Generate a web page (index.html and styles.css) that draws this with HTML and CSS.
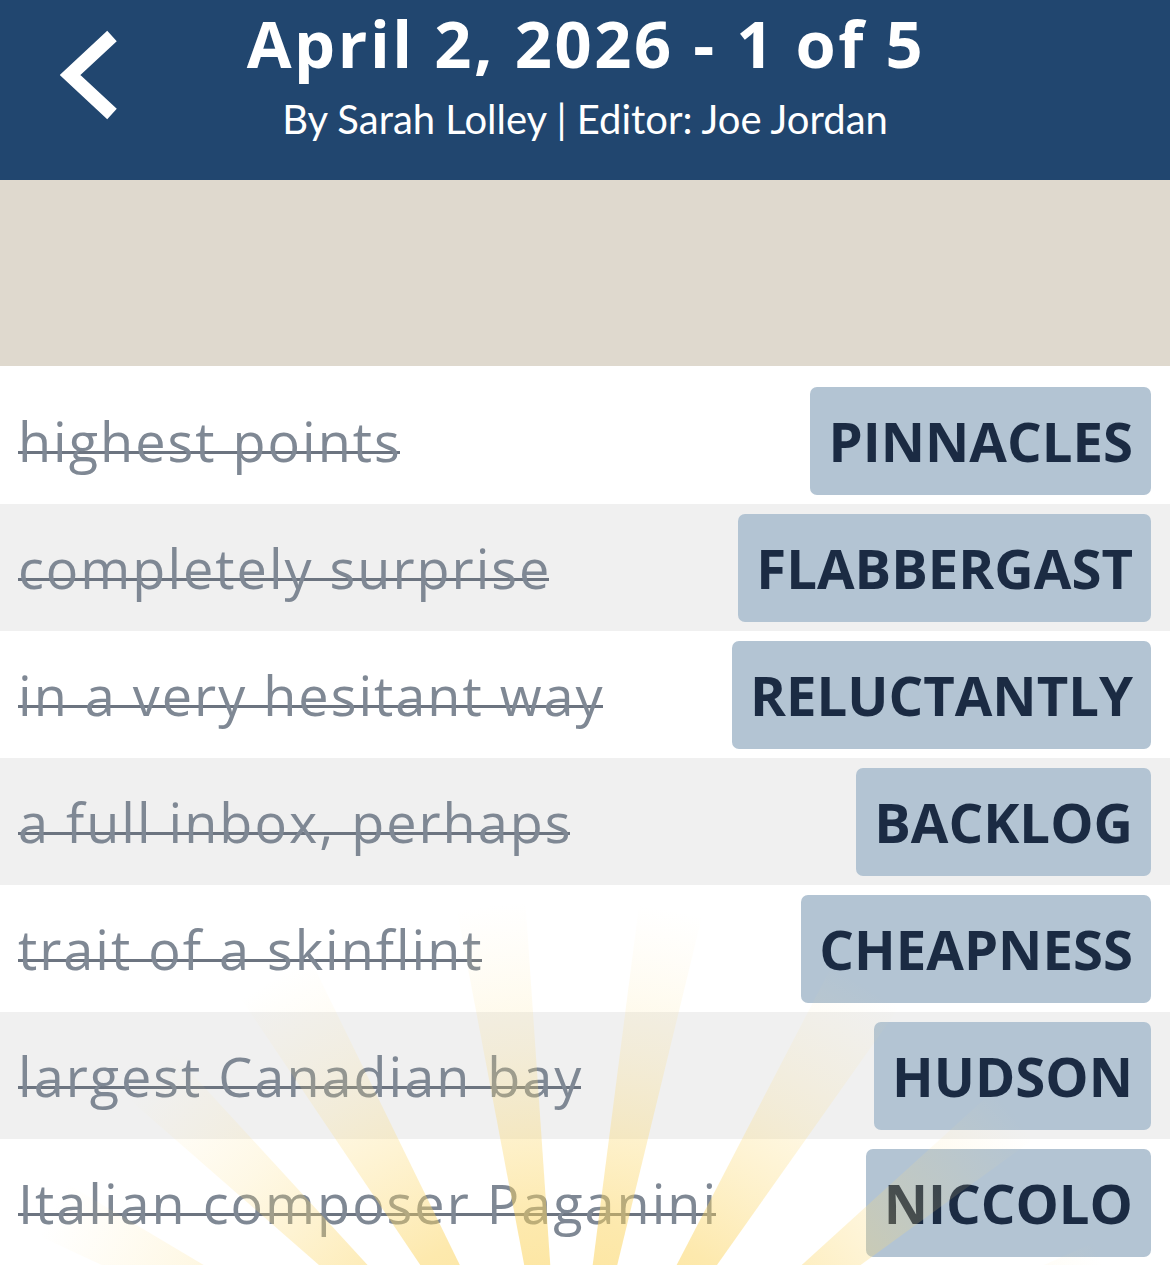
FILE: index.html
```html
<!DOCTYPE html>
<html lang="en">
<head>
<meta charset="utf-8">
<title>April 2, 2026 - 1 of 5</title>
<link rel="stylesheet" href="styles.css">
</head>
<body>
<div class="page">
  <header class="topbar">
    <button class="back" aria-label="Back">
      <svg width="60" height="90" viewBox="0 0 60 90">
        <polyline points="52,6 10,45 52,84" fill="none" stroke="#ffffff" stroke-width="14" stroke-linecap="butt" stroke-linejoin="miter"/>
      </svg>
    </button>
    <div class="titles">
      <h1 class="title">April 2, 2026 - 1 of 5</h1>
      <p class="byline">By Sarah Lolley | Editor: Joe Jordan</p>
    </div>
  </header>
  <div class="banner"></div>
  <ul class="clues">
    <li class="row"><s class="clue">highest points</s><span class="answer">PINNACLES</span></li>
    <li class="row alt"><s class="clue">completely surprise</s><span class="answer">FLABBERGAST</span></li>
    <li class="row"><s class="clue">in a very hesitant way</s><span class="answer">RELUCTANTLY</span></li>
    <li class="row alt"><s class="clue">a full inbox, perhaps</s><span class="answer">BACKLOG</span></li>
    <li class="row"><s class="clue">trait of a skinflint</s><span class="answer">CHEAPNESS</span></li>
    <li class="row alt"><s class="clue">largest Canadian bay</s><span class="answer">HUDSON</span></li>
    <li class="row"><s class="clue">Italian composer Paganini</s><span class="answer">NICCOLO</span></li>
  </ul>
  <svg class="sunburst" width="1170" height="420" viewBox="0 845 1170 420" aria-hidden="true">
    <defs>
      <radialGradient id="rayfade" gradientUnits="userSpaceOnUse" cx="565" cy="1480" r="580">
        <stop offset="0" stop-color="#fbd35c" stop-opacity="0.8"/>
        <stop offset="0.45" stop-color="#fbd35c" stop-opacity="0.5"/>
        <stop offset="0.75" stop-color="#fcdc7c" stop-opacity="0.2"/>
        <stop offset="1" stop-color="#fde49a" stop-opacity="0"/>
      </radialGradient>
    </defs>
    <g fill="url(#rayfade)">
      <polygon points="565,1480 -60,1190 -40,1120"/>
      <polygon points="565,1480 50,1030 115,990"/>
      <polygon points="565,1480 215,960 295,928"/>
      <polygon points="565,1480 455,900 525,896"/>
      <polygon points="565,1480 640,898 705,904"/>
      <polygon points="565,1480 835,960 910,992"/>
      <polygon points="565,1480 1055,1035 1115,1080"/>
      <polygon points="565,1480 1200,1195 1215,1260"/>
    </g>
  </svg>
</div>
</body>
</html>
```
FILE: styles.css
```css
* { box-sizing: border-box; }

html, body {
  margin: 0;
  padding: 0;
  background: #ffffff;
}

.page {
  position: relative;
  width: 1170px;
  height: 1265px;
  overflow: hidden;
  font-family: "Open Sans", "Noto Sans", sans-serif;
}

.topbar {
  height: 180px;
  background: #21466f;
  display: flex;
  align-items: flex-start;
  position: relative;
}

.back {
  position: absolute;
  left: 55px;
  top: 30px;
  width: 70px;
  height: 90px;
  padding: 0;
  border: 0;
  background: transparent;
  display: flex;
  align-items: center;
  justify-content: center;
}

.titles {
  flex: 1;
  display: flex;
  flex-direction: column;
  align-items: center;
  padding-top: 5px;
}

.title {
  margin: 0;
  padding-left: 2px;
  color: #ffffff;
  font-family: "Open Sans", sans-serif;
  font-weight: 700;
  font-size: 65px;
  line-height: 76px;
  letter-spacing: 2.6px;
}

.byline {
  margin: 10px 0 0 0;
  color: #ffffff;
  font-family: "Lato", sans-serif;
  font-weight: 400;
  font-size: 40px;
  line-height: 56px;
}

.banner {
  height: 186px;
  background: #dfd9ce;
}

.clues {
  list-style: none;
  margin: 0;
  padding: 11px 0 0 0;
}

.row {
  height: 127px;
  display: flex;
  align-items: center;
  justify-content: space-between;
  padding: 10px 19px 9px 18px;
  background: #ffffff;
}

.row.alt {
  background: #f0f0f0;
}

.clue {
  color: #7f8894;
  font-family: "Open Sans", sans-serif;
  font-size: 54px;
  line-height: 71px;
  font-weight: 400;
  letter-spacing: 2px;
  text-decoration: none;
  white-space: nowrap;
  background-image: linear-gradient(#6c7480, #6c7480);
  background-repeat: no-repeat;
  background-size: calc(100% - 2px) 3px;
  background-position: 0 45px;
}

.answer {
  height: 108px;
  line-height: 108px;
  padding: 0 18px;
  background: #b3c4d3;
  border-radius: 7px;
  color: #1b2b43;
  font-family: "Open Sans", sans-serif;
  font-weight: 700;
  font-size: 54.5px;
  white-space: nowrap;
}

.sunburst {
  position: absolute;
  left: 0;
  bottom: 0;
  pointer-events: none;
}
```
